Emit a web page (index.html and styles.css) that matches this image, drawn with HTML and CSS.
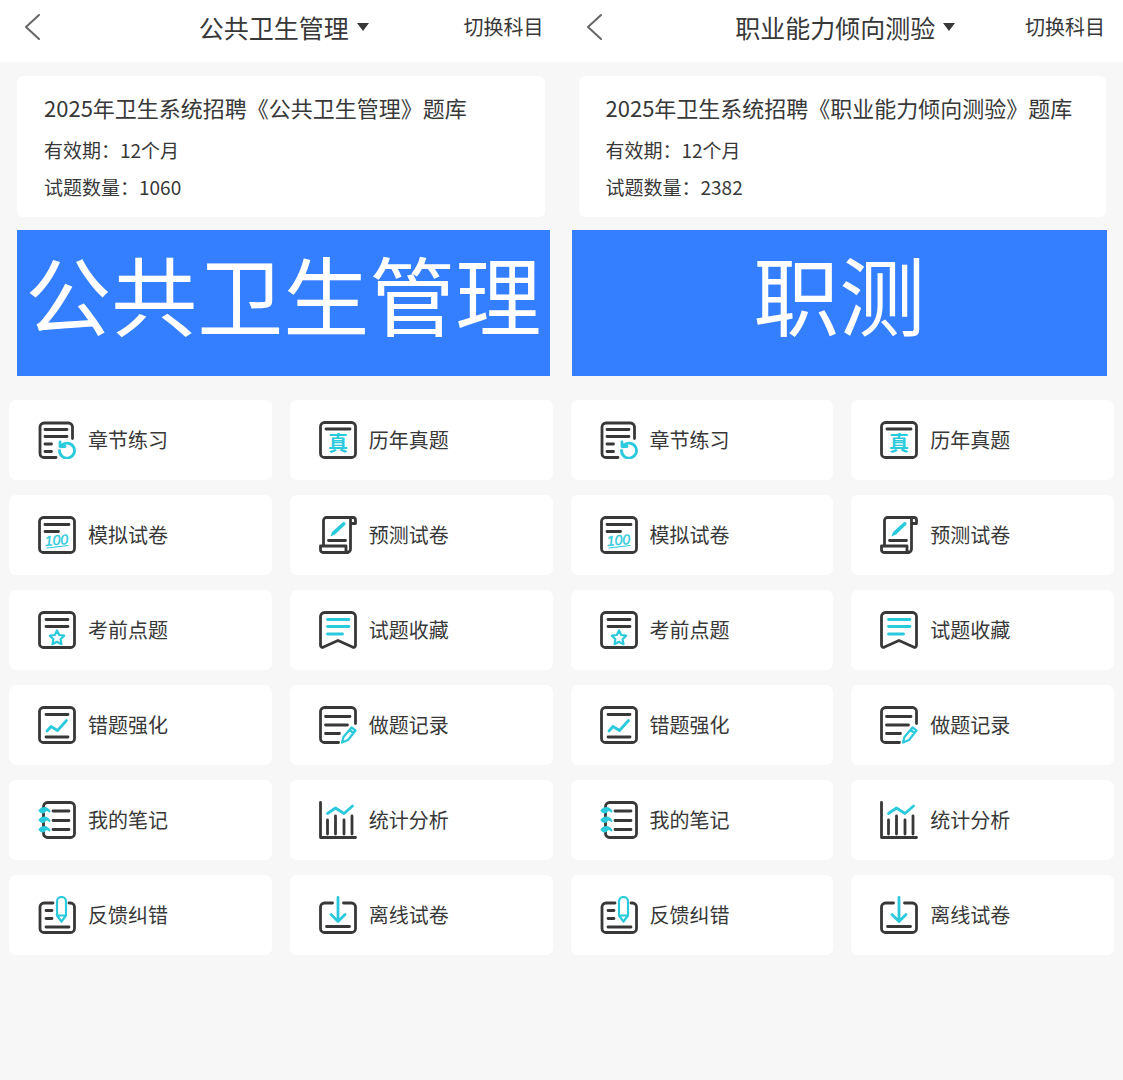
FILE: index.html
```html
<!DOCTYPE html>
<html lang="zh-CN">
<head>
<meta charset="utf-8">
<meta name="viewport" content="width=device-width, initial-scale=1">
<title>题库</title>
<link rel="stylesheet" href="styles.css">
</head>
<body>
<svg class="sprite" aria-hidden="true">
  <symbol id="i-back" viewBox="0 0 16 28"><path d="M15 2 2 14 15 26"/></symbol>
  <symbol id="i-caret" viewBox="0 0 12 8"><path d="M0 0H12L6 8Z"/></symbol>

  <symbol id="i-chapter" viewBox="0 0 38 38">
    <path d="M34.5 17.500V6a4 4 0 0 0-4-4H6a4 4 0 0 0-4 4v26.500a4 4 0 0 0 4 4H18M7 8.500H29M7 15.500H29M7 23H13.500M7 30.500H13.500"/>
    <path class="accent" d="M23.500 24.500A7.500 7.500 0 1 1 21.500 29.500M22 21V25.500H27"/>
  </symbol>
  <symbol id="i-predict" viewBox="0 0 38 38">
    <path d="M4.500 29V4.500a3 3 0 0 1 3-3H34a2.500 2.500 0 0 1 2.500 2.500V7.500H31.500M31.500 2V33a3.500 3.500 0 0 1-3.500 3.500H4a2.500 2.500 0 0 1-2.500-2.500V30H27V33a3 3 0 0 0 2 3.500M9.500 24.500H26.500"/>
    <path class="pen" d="M26 6.500c1 1 .500 2-.500 3L16 18.500l-4.500 2 1.500-4.500L23 7c1-1 2-1.500 3-.500Z"/>
  </symbol>
  <symbol id="i-focus" viewBox="0 0 38 38">
    <rect x="1.500" y="1.500" width="35" height="35" rx="4"/><path d="M8 8.500H30M8 15.500H30"/>
    <path class="accent mid" d="m19 19.500 2.200 4.500 5 .700-3.600 3.500.900 5-4.500-2.400-4.500 2.400.900-5-3.600-3.500 5-.700Z"/>
  </symbol>
  <symbol id="i-favorite" viewBox="0 0 38 38">
    <path d="M5.500 1.500H32.500a4 4 0 0 1 4 4V34c0 2-1.500 3-3 2L19 29.500 4.500 36c-1.500 1-3 0-3-2V5.500a4 4 0 0 1 4-4Z"/>
    <path class="accent" d="M8.500 8.500H30M8.500 15.500H30M8.500 23H23.500"/>
  </symbol>
  <symbol id="i-wrong" viewBox="0 0 38 38">
    <rect x="1.500" y="1.500" width="35" height="35" rx="4"/><path d="M8 8.500H30M8 31H30"/>
    <path class="accent" d="m9 25 4-4.500 6.500 4L28.500 14.500"/>
  </symbol>
  <symbol id="i-record" viewBox="0 0 38 38">
    <path d="M36.500 17.500V5.500a4 4 0 0 0-4-4H5.500a4 4 0 0 0-4 4v27a4 4 0 0 0 4 4H19.500M6.500 10.500H31M6.500 19H28.500M6.500 27.500H20.500"/>
    <path class="accent mid" d="M32.500 21.500 36.500 24.500 29 34 23 36.500 24.500 31ZM30.500 24l4 3"/>
  </symbol>
  <symbol id="i-notes" viewBox="0 0 38 38">
    <rect x="5.500" y="1.500" width="31" height="35" rx="4"/><path d="M15 10H31M15 19.500H31M15 28.500H31"/>
    <path class="ring" d="M11.500 10.500C9 6 4 6 1.500 9.500 3 12 6 12 7 10M11.500 20C9 15.500 4 15.500 1.500 19 3 21.500 6 21.500 7 19.500M11.500 29.500C9 25 4 25 1.500 28.500 3 31 6 31 7 29"/>
  </symbol>
  <symbol id="i-stats" viewBox="0 0 38 38">
    <path d="M1.500 1.500V36.500H36.500M8.500 19V33M16.500 15V33M25 19V33M33 15V33"/>
    <path class="accent" d="m8.500 12.500 8-5.500 8.500 5.500L33.500 5"/>
  </symbol>
  <symbol id="i-feedback" viewBox="0 0 38 38">
    <path d="M15 7H6a4 4 0 0 0-4 4v21.500a4 4 0 0 0 4 4H32.500a4 4 0 0 0 4-4V11a4 4 0 0 0-4-4H31M8 14.500H14M8 22.500H14M8 31H31"/>
    <path class="accent mid" d="M19 5.500a4.500 4.500 0 0 1 9 0V19.500L23.500 25.500 19 19.500ZM19 19.500H28"/>
  </symbol>
  <symbol id="i-offline" viewBox="0 0 38 38">
    <path d="M13.500 7H5.500a4 4 0 0 0-4 4v21.500a4 4 0 0 0 4 4H32.500a4 4 0 0 0 4-4V11a4 4 0 0 0-4-4H24.500M7.500 30.500H30.500"/>
    <path class="accent" d="M19 1.500V25.500M12 18.500 19 25.500 26 18.500"/>
  </symbol>
</svg>

<main class="screens">
  <section class="screen">
    <header class="topbar">
      <button class="back" type="button" aria-label="返回"><svg><use href="#i-back"/></svg></button>
      <label class="subject">
        <select aria-label="科目"><option>公共卫生管理</option></select>
        <svg aria-hidden="true"><use href="#i-caret"/></svg>
      </label>
      <button class="switch" type="button">切换科目</button>
    </header>
    <article class="bank">
      <h1>2025年卫生系统招聘《公共卫生管理》题库</h1>
      <p>有效期：12个月</p>
      <p>试题数量：1060</p>
    </article>
    <h2 class="banner">公共卫生管理</h2>
    <nav class="menu">
      <a href="#"><svg><use href="#i-chapter"/></svg>章节练习</a>
      <a href="#">
        <svg viewBox="0 0 38 38" aria-hidden="true">
          <rect x="1.500" y="1.500" width="35" height="35" rx="4"/><path d="M7 8H31"/>
          <text class="icon-text" x="19" y="30" font-size="20">真</text>
        </svg>历年真题</a>
      <a href="#">
        <svg viewBox="0 0 38 38" aria-hidden="true">
          <rect x="1.500" y="1.500" width="35" height="35" rx="4"/><path d="M7 8.500H31M7 15.500H20.500"/>
          <text class="icon-text icon-score" x="19" y="29" font-size="14" transform="rotate(-5 19 29)">100</text>
          <path class="accent thin" d="M9 32 30 29.500"/>
        </svg>模拟试卷</a>
      <a href="#"><svg><use href="#i-predict"/></svg>预测试卷</a>
      <a href="#"><svg><use href="#i-focus"/></svg>考前点题</a>
      <a href="#"><svg><use href="#i-favorite"/></svg>试题收藏</a>
      <a href="#"><svg><use href="#i-wrong"/></svg>错题强化</a>
      <a href="#"><svg><use href="#i-record"/></svg>做题记录</a>
      <a href="#"><svg><use href="#i-notes"/></svg>我的笔记</a>
      <a href="#"><svg><use href="#i-stats"/></svg>统计分析</a>
      <a href="#"><svg><use href="#i-feedback"/></svg>反馈纠错</a>
      <a href="#"><svg><use href="#i-offline"/></svg>离线试卷</a>
    </nav>
  </section>

  <section class="screen">
    <header class="topbar">
      <button class="back" type="button" aria-label="返回"><svg><use href="#i-back"/></svg></button>
      <label class="subject">
        <select aria-label="科目"><option>职业能力倾向测验</option></select>
        <svg aria-hidden="true"><use href="#i-caret"/></svg>
      </label>
      <button class="switch" type="button">切换科目</button>
    </header>
    <article class="bank">
      <h1>2025年卫生系统招聘《职业能力倾向测验》题库</h1>
      <p>有效期：12个月</p>
      <p>试题数量：2382</p>
    </article>
    <h2 class="banner banner-aptitude">职测</h2>
    <nav class="menu">
      <a href="#"><svg><use href="#i-chapter"/></svg>章节练习</a>
      <a href="#">
        <svg viewBox="0 0 38 38" aria-hidden="true">
          <rect x="1.500" y="1.500" width="35" height="35" rx="4"/><path d="M7 8H31"/>
          <text class="icon-text" x="19" y="30" font-size="20">真</text>
        </svg>历年真题</a>
      <a href="#">
        <svg viewBox="0 0 38 38" aria-hidden="true">
          <rect x="1.500" y="1.500" width="35" height="35" rx="4"/><path d="M7 8.500H31M7 15.500H20.500"/>
          <text class="icon-text icon-score" x="19" y="29" font-size="14" transform="rotate(-5 19 29)">100</text>
          <path class="accent thin" d="M9 32 30 29.500"/>
        </svg>模拟试卷</a>
      <a href="#"><svg><use href="#i-predict"/></svg>预测试卷</a>
      <a href="#"><svg><use href="#i-focus"/></svg>考前点题</a>
      <a href="#"><svg><use href="#i-favorite"/></svg>试题收藏</a>
      <a href="#"><svg><use href="#i-wrong"/></svg>错题强化</a>
      <a href="#"><svg><use href="#i-record"/></svg>做题记录</a>
      <a href="#"><svg><use href="#i-notes"/></svg>我的笔记</a>
      <a href="#"><svg><use href="#i-stats"/></svg>统计分析</a>
      <a href="#"><svg><use href="#i-feedback"/></svg>反馈纠错</a>
      <a href="#"><svg><use href="#i-offline"/></svg>离线试卷</a>
    </nav>
  </section>
</main>
</body>
</html>
```
FILE: styles.css
```css
:root {
  --ink: #383838;
  --accent: #2bc9dc;
  --blue: #347fff;
  --page: #f7f7f7;
}

* { box-sizing: border-box; }

body {
  margin: 0;
  background: var(--page);
  color: var(--ink);
  font-family: "Noto Sans CJK SC", sans-serif;
}

h1, h2, p { margin: 0; font-weight: 400; }

button, select {
  margin: 0;
  padding: 0;
  border: 0;
  background: none;
  color: inherit;
  font: inherit;
}

svg {
  display: block;
  fill: none;
  stroke: var(--ink);
  stroke-width: 2.8;
  stroke-linecap: round;
  stroke-linejoin: round;
}

.sprite { position: absolute; width: 0; height: 0; }

.accent { stroke: var(--accent); }
.mid { stroke-width: 2.2; }
.thin { stroke-width: 1.2; }
.pen { fill: var(--accent); stroke: none; }
.ring { fill: var(--accent); stroke: var(--accent); stroke-width: 2; }

.icon-text {
  fill: var(--accent);
  stroke: none;
  font-weight: 700;
  text-anchor: middle;
}

.icon-score {
  font-family: "Liberation Sans", sans-serif;
  font-style: italic;
  font-weight: 400;
  stroke: var(--accent);
  stroke-width: 0.4;
}

.screens { display: grid; grid-template-columns: 1fr 1fr; }

.screen { min-width: 0; }

.topbar {
  display: grid;
  grid-template-columns: 1fr auto 1fr;
  align-items: center;
  padding: 0 18px 8px 24px;
  background: #fff;
  line-height: 54px;
}

.back { justify-self: start; }
.back svg { width: 16px; height: 28px; stroke: #666; stroke-width: 2; }

.subject { display: flex; align-items: center; gap: 7px; font-size: 25px; }
.subject select { appearance: none; height: 54px; padding-bottom: 4px; }
.subject svg { width: 12px; height: 8px; fill: var(--ink); stroke: none; }

.switch { justify-self: end; font-size: 20px; }

.bank {
  margin: 14px 17px 13px;
  padding: 15px 27px 12px;
  border-radius: 6px;
  background: #fff;
}

.bank h1 { margin-bottom: 8px; font-size: 22px; line-height: 32px; white-space: nowrap; }
.bank p { font-size: 19px; line-height: 37px; }

.banner {
  margin: 0 12px 24px 17px;
  padding-bottom: 20px;
  background: var(--blue);
  color: #fff;
  font-size: 86px;
  line-height: 126px;
  text-align: center;
  white-space: nowrap;
}

.banner-aptitude { margin-right: 16px; margin-left: 10px; }

.menu {
  display: grid;
  grid-template-columns: 1fr 1fr;
  gap: 15px 18px;
  padding: 0 9px;
}

.menu a {
  display: flex;
  align-items: center;
  gap: 12px;
  padding: 21px 29px;
  border-radius: 7px;
  background: #fff;
  color: inherit;
  font-size: 20px;
  line-height: 38px;
  text-decoration: none;
}

.menu svg { width: 38px; height: 38px; }
```
